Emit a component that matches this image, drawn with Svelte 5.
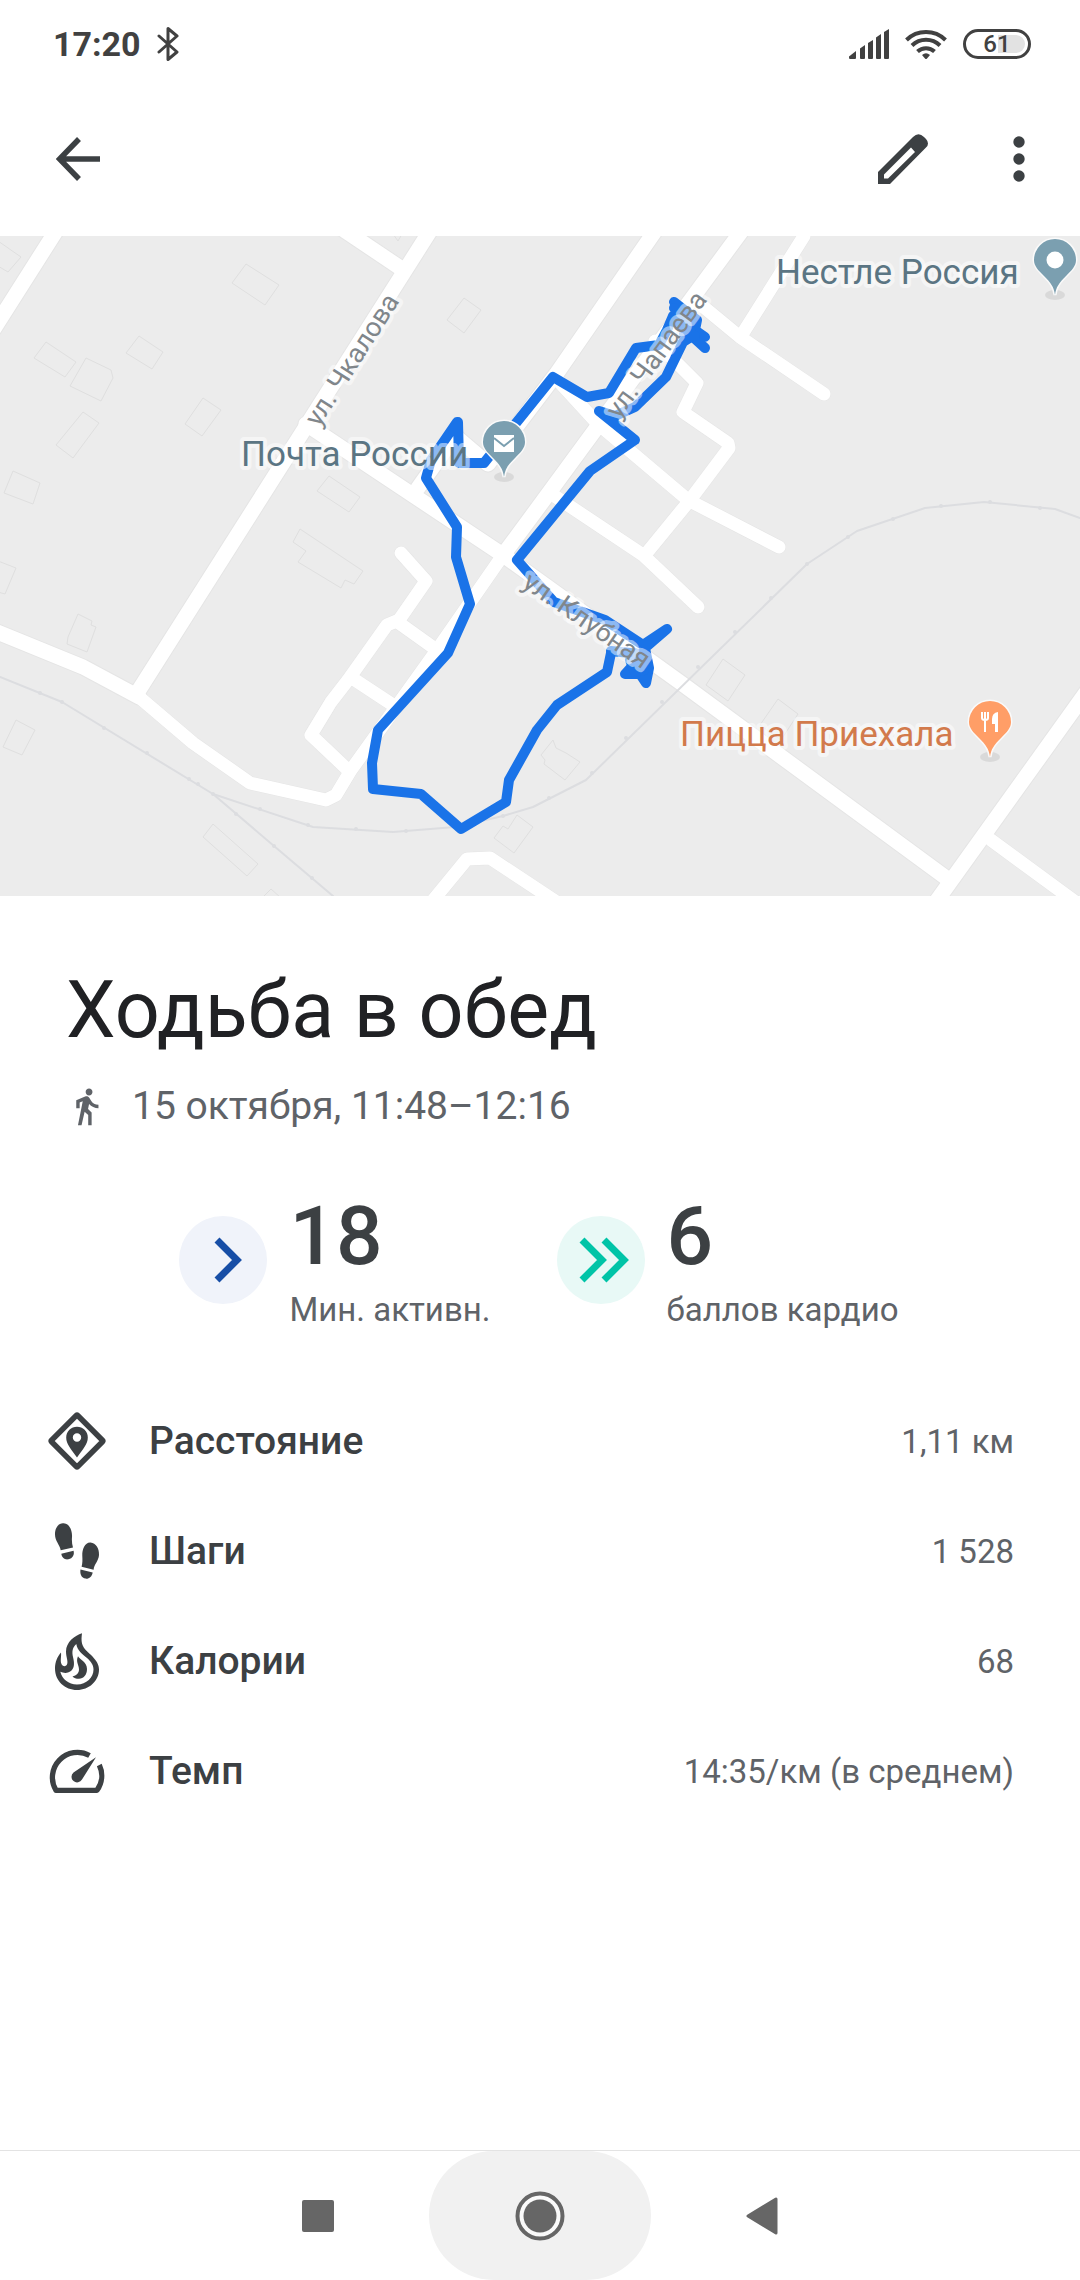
<script lang="ts">
  type Metric = { icon: string; label: string; value: string };

  const metrics: Metric[] = [
    { icon: "distance", label: "Расстояние", value: "1,11 км" },
    { icon: "steps", label: "Шаги", value: "1 528" },
    { icon: "calories", label: "Калории", value: "68" },
    { icon: "pace", label: "Темп", value: "14:35/км (в среднем)" },
  ];

  // Map geometry, in map units (1080 x 660)
  const streets: string[] = [
    "63,-16 -10,99",
    "437,-16 139,454",
    "338,-10 399,31",
    "306,188 503,319 681,447 945,641",
    "418,252 455,200 488,228 557,137 662,-15",
    "749,-15 595,194 540,269 503,319",
    "1090,451 933,670",
    "139,461 83,431 -10,393",
  ];
  const lanes: string[] = [
    "554,140 597,187 688,264 779,311",
    "503,319 437,414 351,534 336,559 326,564 250,547 193,507 139,461",
    "804,0 743,97",
    "700,68 740,101 824,158",
    "655,105 697,147 683,176 728,207 729,212 690,264 645,319",
    "550,257 643,319 698,371",
    "991,604 1085,673",
    "430,668 467,623 490,622 555,665",
    "401,317 426,345 399,384 387,389 348,444 331,466 311,499 348,534",
    "399,387 434,412",
    "355,444 396,471",
  ];
  const rails: string[] = [
    "0,441 62,466 213,558 313,591 393,596 455,591 503,580 533,571 586,544 807,328 857,295 925,272 984,266 1055,273 1080,282",
    "213,558 274,610 333,660",
  ];
  const ties: [number, number][] = [
    [40, 457], [62, 466], [104, 492], [147, 517], [189, 543], [198, 548], [213, 558],
    [260, 573], [308, 589], [356, 593], [406, 595], [503, 580], [549, 562], [592, 537],
    [626, 502], [662, 466], [698, 431], [735, 396], [771, 362], [807, 328], [848, 301],
    [893, 283], [941, 270], [990, 266], [1040, 272], [236, 578], [274, 610], [312, 642],
  ];
  const buildings: string[] = [
    "-2,5 21,21 8,36 -2,30",
    "246,28 279,49 265,69 232,47",
    "464,62 481,74 464,97 447,84",
    "46,106 76,126 65,141 34,122",
    "86,122 111,134 113,142 101,165 70,150",
    "139,100 163,116 152,133 126,117",
    "203,162 221,174 202,200 185,188",
    "83,176 99,187 73,222 56,209",
    "13,235 40,247 33,268 4,257",
    "329,240 360,261 349,276 317,255",
    "300,293 363,335 354,348 345,344 341,352 298,326 306,315 293,306",
    "393,-2 398,5 402,-2",
    "-2,325 16,332 5,358 -2,356",
    "78,378 92,385 91,389 96,391 87,416 67,408 68,401",
    "16,484 35,494 22,519 3,511",
    "213,588 258,628 247,640 203,601",
    "262,662 271,653 281,662",
    "517,579 533,591 514,617 494,602 503,590 508,593",
    "723,423 745,439 728,465 706,449",
    "778,463 798,478 781,504 760,489",
    "553,504 556,512 566,517 580,526 565,544 544,528 545,524 541,519",
  ];
  const route: string[] = [
    "674,66 697,84 695,94 705,101 693,101 705,112 690,98 673,80 667,94 659,109 636,112 609,157 587,161 553,141 484,227 459,227 458,186 457,186 431,224 426,242 457,291 456,321 470,368 448,417 378,494 372,527 373,553 421,558 461,593 506,566 509,544 537,494 557,469 607,436 611,417",
    "691,101 683,106 666,141 635,171 615,180 599,175 635,204 590,235 540,296 517,324 554,366 605,384 643,409 667,393 645,412 649,432 646,447 640,438 625,438 635,427 647,430 640,418 611,415",
    "674,72 688,88 692,98 684,98 695,100",
    "630,424 635,436 644,434 632,430",
  ];
</script>

{#snippet pin(x: number, y: number, color: string)}
  <ellipse cx={x} cy={y + 35} rx="10" ry="5" fill="#000" opacity="0.08" />
  <path
    transform="translate({x} {y})"
    d="M0 35C-1 27-4 23-11 16C-17 10-21 6-21 0A21 21 0 1 1 21 0C21 6 17 10 11 16C4 23 1 27 0 35Z"
    fill={color}
    stroke="#fafafa"
    stroke-width="3"
    paint-order="stroke"
  />
{/snippet}

<div class="screen">
  <div class="status">
    <div class="status-group">
      <span class="time">17:20</span>
      <svg width="22" height="36" viewBox="0 0 22 36" aria-label="Bluetooth">
        <path d="M2 10L20 26L11 33.500V2.500L20 10L2 26" fill="none" stroke="#414141" stroke-width="3" stroke-linecap="round" stroke-linejoin="round" />
      </svg>
    </div>
    <div class="status-group">
      <svg width="40" height="30" viewBox="0 0 40 30" fill="#414141" aria-label="Сигнал">
        <path d="M0 27.500L7 22V29Q7 30 6 30H1Q0 30 0 28.500Z" />
        <path d="M11 19.500L16 16V29Q16 30 15 30H12Q11 30 11 29Z" />
        <path d="M19 14L24 11V29Q24 30 23 30H20Q19 30 19 29Z" />
        <path d="M27 8.500L32 5V29Q32 30 31 30H28Q27 30 27 29Z" />
        <path d="M35 3L40 0V29Q40 30 39 30H36Q35 30 35 29Z" />
      </svg>
      <svg width="42" height="30" viewBox="0 0 42 30" aria-label="Wi-Fi">
        <g fill="none" stroke="#414141" stroke-width="4">
          <path d="M1.500 11A28 28 0 0 1 40.500 11" />
          <path d="M7 16.500A20 20 0 0 1 35 16.500" />
          <path d="M12.500 22.500A12.500 12.500 0 0 1 29.500 22.500" />
        </g>
        <path d="M17 26Q21 22.500 25 26L22 29.500Q21 30.500 20 29.500Z" fill="#414141" />
      </svg>
      <div class="battery"><span class="charge"></span><span class="percent">61</span></div>
    </div>
  </div>

  <header class="app-bar">
    <button class="icon-button" aria-label="Назад">
      <svg width="44" height="44" viewBox="0 0 44 44" fill="none" stroke="#3c4043" stroke-width="5.500">
        <path d="M23 2L3.500 22L23 42M4 22H44" />
      </svg>
    </button>
    <div class="actions">
      <button class="icon-button" aria-label="Изменить">
        <svg width="50" height="50" viewBox="0 0 50 50" fill="#3c4043">
          <path fill-rule="evenodd" d="M0 38L35 3Q40.500-2.500 46 3L48 5Q52 9.500 48 13.500L12 50H0ZM6 40.500V44.500H10L37 18L33 13.500Z" />
        </svg>
      </button>
      <button class="icon-button" aria-label="Ещё">
        <svg width="12" height="46" viewBox="0 0 12 46" fill="#3c4043">
          <circle cx="6" cy="6" r="5.700" />
          <circle cx="6" cy="23" r="5.700" />
          <circle cx="6" cy="40" r="5.700" />
        </svg>
      </button>
    </div>
  </header>

  <svg class="map" viewBox="0 0 1080 660" role="img" aria-label="Маршрут на карте">
    <rect width="1080" height="660" fill="#ececec" />
    <g class="building">
      {#each buildings as points}<polygon {points} />{/each}
    </g>
    <g class="casing">
      {#each streets as points}<polyline {points} stroke-width="17" />{/each}
      {#each lanes as points}<polyline {points} stroke-width="14" />{/each}
    </g>
    <g class="road">
      {#each streets as points}<polyline {points} stroke-width="15" />{/each}
      {#each lanes as points}<polyline {points} stroke-width="13" />{/each}
    </g>
    <g class="rail">
      {#each rails as points}<polyline {points} />{/each}
      {#each ties as [x, y]}<circle cx={x} cy={y} r="1" />{/each}
    </g>
    <g class="route">
      {#each route as points}<polyline {points} />{/each}
    </g>

    <g class="street">
      <text transform="translate(319 192) rotate(-57.500)">ул. Чкалова</text>
      <text transform="translate(619 184) rotate(-53.500)">ул. Чапаева</text>
      <text transform="translate(521 350) rotate(34.500)">ул. Клубная</text>
    </g>
    <g class="place">
      <text x="776" y="48">Нестле Россия</text>
      <text x="241" y="230">Почта России</text>
      <text class="food" x="680" y="510">Пицца Приехала</text>
    </g>

    {@render pin(1055, 24, "#7b9fb0")}
    <circle cx="1055" cy="24" r="8.500" fill="#fff" />
    {@render pin(504, 206, "#7b9fb0")}
    <path d="M494 199H514V216H494Z" fill="#fff" />
    <path d="M494 202L504 210L514 202" fill="none" stroke="#7b9fb0" stroke-width="2" />
    {@render pin(990, 486, "#ff9e67")}
    <g fill="none" stroke="#fff" stroke-width="2">
      <path d="M982 476V482Q982 484 985 484Q988 484 988 482V476M985 476V496" />
    </g>
    <path d="M998 476V496H995V488H992V483Q992 477 998 476Z" fill="#fff" />
  </svg>

  <main>
    <h1>Ходьба в обед</h1>
    <p class="when">
      <svg width="41" height="41" viewBox="0 0 24 24" fill="#5f6368" aria-hidden="true">
        <path d="M13.500 5.500c1.100 0 2-.900 2-2s-.900-2-2-2-2 .900-2 2 .900 2 2 2zM9.800 8.900L7 23h2.100l1.800-8 2.100 2v6h2v-7.500l-2.100-2 .600-3C14.800 12 16.800 13 19 13v-2c-1.900 0-3.500-1-4.300-2.400l-1-1.600c-.400-.600-1-1-1.700-1-.300 0-.500.100-.800.100L6 8.300V13h2V9.600l1.800-.700z" />
      </svg>
      <span>15 октября, 11:48–12:16</span>
    </p>

    <div class="scores">
      <div class="score">
        <svg width="88" height="88" viewBox="0 0 88 88" aria-hidden="true">
          <circle cx="44" cy="44" r="44" fill="#f0f3fa" />
          <path d="M38 24L58 44L38 64" fill="none" stroke="#174ea6" stroke-width="7" />
        </svg>
        <div class="score-text">
          <strong>18</strong>
          <span>Мин. активн.</span>
        </div>
      </div>
      <div class="score">
        <svg width="88" height="88" viewBox="0 0 88 88" aria-hidden="true">
          <circle cx="44" cy="44" r="44" fill="#e8f9f6" />
          <path d="M25 24L45 44L25 64M47 24L67 44L47 64" fill="none" stroke="#00c4a7" stroke-width="7" />
        </svg>
        <div class="score-text">
          <strong>6</strong>
          <span>баллов кардио</span>
        </div>
      </div>
    </div>

    <dl class="metrics">
      {#each metrics as { icon, label, value }}
        <div class="metric">
          <dt>
            <svg width="60" height="60" viewBox="0 0 60 60" fill="#3c4043" aria-hidden="true">
              {#if icon === "distance"}
                <rect x="11.500" y="11.500" width="37" height="37" rx="1" transform="rotate(45 30 30)" fill="none" stroke="#3c4043" stroke-width="5.500" stroke-linejoin="round" />
                <path fill-rule="evenodd" d="M30 46.500C24 38 19.200 33 19.200 26.500A10.800 10.800 0 0 1 40.800 26.500C40.800 33 36 38 30 46.500ZM30 22.300A4.200 4.200 0 1 0 30 30.700A4.200 4.200 0 1 0 30 22.300Z" />
              {:else if icon === "steps"}
                <path d="M16 2.300C22 2 25.500 9 25 16C24.700 20 25 23 26 26.500L13.700 29.200C13 24 8 20 8 13.500C8 7 11 2.600 16 2.300Z" />
                <path d="M14.300 32.700L26.600 29.800C27.600 34 25.500 37.500 21.500 38.300C17.500 39 14.800 36.500 14.300 32.700Z" />
                <path d="M43.500 21.600C49 22 52.300 27.500 52 34C51.600 40 47 43.500 46.600 48.700L34.600 45.800C35.600 42 35.500 38.500 35.300 35C35 28 38 21.300 43.500 21.600Z" />
                <path d="M33.500 48.500L45.700 51.400C45 55.500 42 58 38.500 57.600C34.500 57 32.700 53 33.500 48.500Z" />
              {:else if icon === "calories"}
                <path fill-rule="evenodd" d="M35 2.300C34.500 6 34.300 9 35 12.500C36.500 18.500 42 21.500 45.500 25.500C49.500 30 52 33.500 52 38.500C52 50 42 59 30 59C18 59 8 50 8 37.500C8 31 10.500 25.500 14 21.600C14.500 26 13 30 14.500 33C15.500 35.500 18.500 36 20 33.500C21.500 30.500 19 26 19 20.500C19 11 28 4.500 35 2.300ZM29.300 13C25 17 25 21 26 26C27.500 32 27.500 36.500 24.500 39.500C21.500 42.500 17 42.500 13.300 40.800C15 48 21.500 53.500 30 53.500C39.500 53.500 46.500 46.500 46.500 38.500C46.500 34 44 30.500 40 27C35 22.500 30.500 20 29.300 13Z" />
                <path d="M31 25.300C33 29 40 31 40 38C40 44 36.500 47.500 32 47.800C29.500 47.900 27 47 25.500 45.500C29.500 44.500 32 42 32 38.500C32 34 28.500 31 31 25.300Z" />
              {:else}
                <path d="M42.500 14.500A25 25 0 0 0 9 49.300H50A25 25 0 0 0 52.300 24" fill="none" stroke="#3c4043" stroke-width="5.300" stroke-linejoin="round" />
                <path d="M49 16.300L35 38.500A5.600 5.600 0 1 1 26.500 31.500Z" />
              {/if}
            </svg>
            {label}
          </dt>
          <dd>{value}</dd>
        </div>
      {/each}
    </dl>
  </main>

  <nav class="system-nav">
    <button aria-label="Недавние">
      <svg width="32" height="32" viewBox="0 0 32 32"><rect width="32" height="32" rx="2" fill="#666" /></svg>
    </button>
    <button class="home" aria-label="Домой">
      <svg width="50" height="50" viewBox="0 0 50 50">
        <circle cx="25" cy="25" r="22.500" fill="#fafafa" stroke="#666" stroke-width="4" />
        <circle cx="25" cy="25" r="16.500" fill="#666" />
      </svg>
    </button>
    <button aria-label="Назад">
      <svg width="32" height="38" viewBox="0 0 32 38">
        <path d="M2 19L30 2V36Z" fill="#666" stroke="#666" stroke-width="3" stroke-linejoin="round" />
      </svg>
    </button>
  </nav>
</div>

<style>
  .screen {
    display: flex;
    flex-direction: column;
    min-height: 100vh;
    background: #fff;
    color: #3c4043;
    font-family: Roboto, "Noto Sans", sans-serif;
  }
  svg {
    display: block;
    flex: none;
  }
  button {
    display: flex;
    align-items: center;
    justify-content: center;
    padding: 0;
    border: 0;
    background: none;
  }

  .status {
    display: flex;
    align-items: center;
    justify-content: space-between;
    height: 88px;
    padding: 0 49px 0 53px;
  }
  .status-group {
    display: flex;
    align-items: center;
    gap: 16px;
  }
  .time {
    font-size: 34px;
    font-weight: 700;
    line-height: 40px;
    color: #414141;
  }
  .battery {
    position: relative;
    box-sizing: border-box;
    display: flex;
    align-items: center;
    justify-content: center;
    width: 68px;
    height: 30px;
    border: 3px solid #414141;
    border-radius: 15px;
  }
  .charge {
    position: absolute;
    top: 3px;
    right: 3px;
    width: 27px;
    height: 18px;
    border-radius: 0 9px 9px 0;
    background: #e2e2e2;
  }
  .percent {
    position: relative;
    font-size: 24px;
    font-weight: 500;
    line-height: 24px;
    color: #414141;
  }

  .app-bar {
    display: flex;
    align-items: center;
    justify-content: space-between;
    height: 142px;
    margin-bottom: 6px;
    padding: 0 25px 0 42px;
  }
  .icon-button {
    width: 72px;
    height: 72px;
  }
  .actions {
    display: flex;
    gap: 44px;
  }

  .map {
    width: 100%;
    height: auto;
  }
  .building {
    fill: none;
    stroke: #dfdfdf;
    stroke-width: 1;
  }
  .casing,
  .road,
  .rail,
  .route {
    fill: none;
    stroke-linecap: round;
    stroke-linejoin: round;
  }
  .casing {
    stroke: #e5e5e5;
  }
  .road {
    stroke: #fff;
  }
  .rail {
    stroke: #dcdde0;
    stroke-width: 2;
  }
  .route {
    stroke: #1a73e8;
    stroke-width: 10;
  }
  .street,
  .place {
    stroke: rgba(255, 255, 255, 0.5);
    stroke-width: 8;
    stroke-linejoin: round;
    paint-order: stroke;
  }
  .street {
    font-size: 27px;
    fill: #80868b;
  }
  .place {
    font-size: 35px;
    fill: #5b7583;
  }
  .place .food {
    fill: #d27a4c;
  }

  main {
    flex: 1;
    padding: 66px 66px 0 47px;
  }
  h1 {
    margin: 0 0 0 19px;
    font-size: 79px;
    font-weight: 400;
    line-height: 96px;
    color: #202124;
  }
  .when {
    display: flex;
    align-items: center;
    gap: 25px;
    margin: 24px 0 0 19px;
    font-size: 39px;
    line-height: 48px;
    color: #5f6368;
  }

  .scores {
    display: flex;
    justify-content: center;
    gap: 66px;
    margin: 60px 0 0 17px;
  }
  .score {
    display: flex;
    align-items: center;
    gap: 22px;
  }
  .score-text {
    display: flex;
    flex-direction: column;
    gap: 12px;
    padding-top: 4px;
  }
  .score strong {
    font-size: 82px;
    font-weight: 500;
    line-height: 84px;
  }
  .score span {
    font-size: 33px;
    line-height: 40px;
    color: #5f6368;
  }

  .metrics {
    margin: 56px 0 0;
  }
  .metric {
    display: flex;
    align-items: center;
    justify-content: space-between;
    height: 110px;
  }
  dt {
    display: flex;
    align-items: center;
    gap: 42px;
    font-size: 39px;
    font-weight: 500;
  }
  dd {
    margin: 0;
    font-size: 33px;
    color: #5f6368;
  }

  .system-nav {
    display: flex;
    justify-content: center;
    border-top: 1px solid #e3e3e3;
  }
  .system-nav button {
    width: 222px;
    height: 129px;
  }
  .system-nav .home {
    border-radius: 65px;
    background: #f1f1f1;
  }
</style>
